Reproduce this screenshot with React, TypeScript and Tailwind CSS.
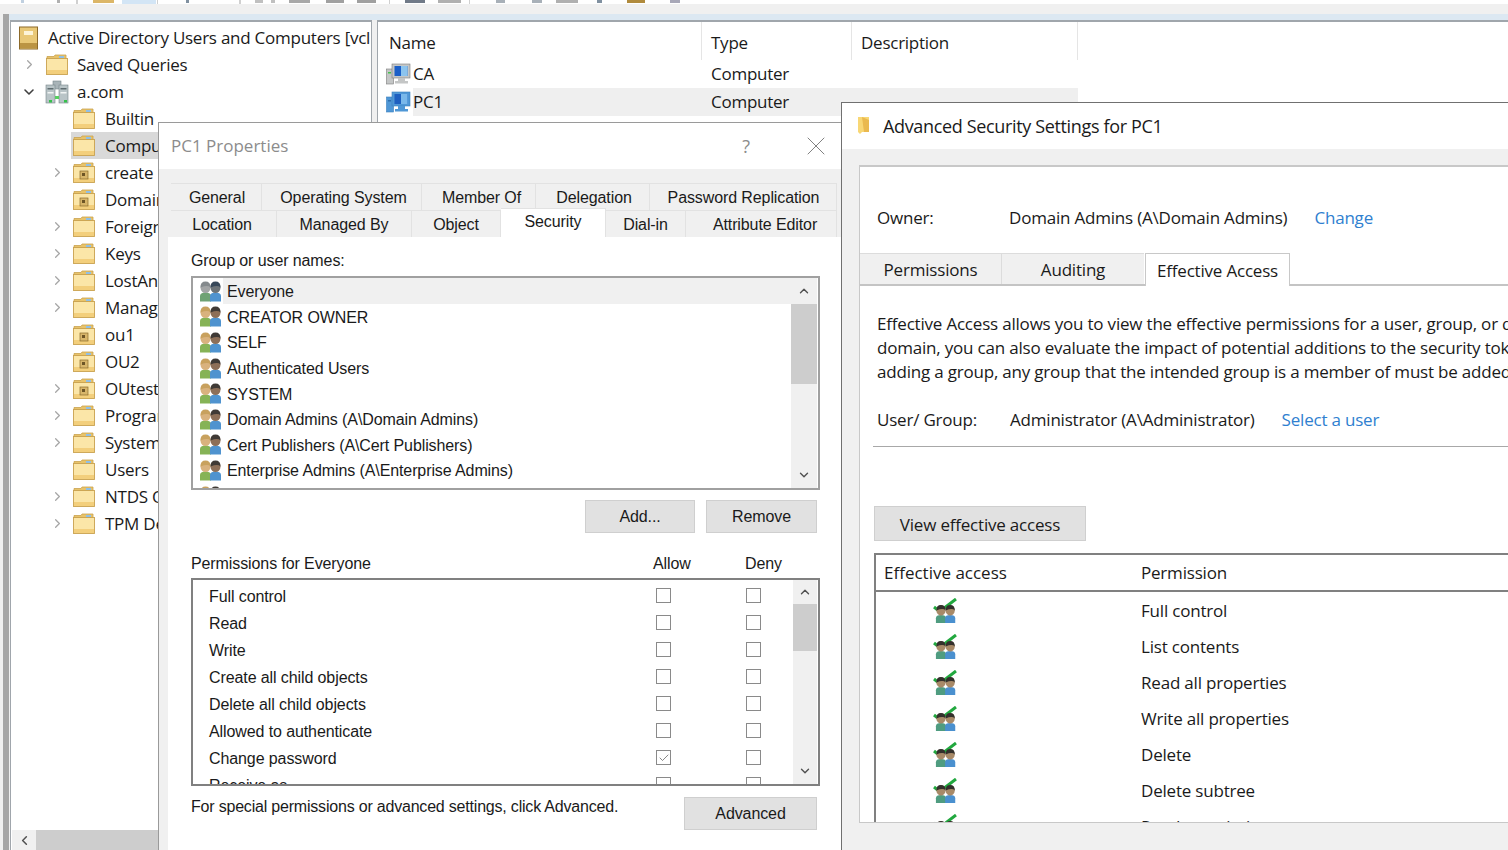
import React from 'react';
import { ChevronRight, ChevronDown, ChevronUp, ChevronLeft, X, Check } from 'lucide-react';

const treeRows = [
  { label: 'Builtin', icon: 'folder', arrow: false },
  { label: 'Computers', icon: 'folder', arrow: false, selected: true },
  { label: 'create new', icon: 'ou', arrow: true },
  { label: 'Domain Controllers', icon: 'ou', arrow: false },
  { label: 'ForeignSecurityPrincipals', icon: 'folder', arrow: true },
  { label: 'Keys', icon: 'folder', arrow: true },
  { label: 'LostAndFound', icon: 'folder', arrow: true },
  { label: 'Managed Service Accounts', icon: 'folder', arrow: true },
  { label: 'ou1', icon: 'ou', arrow: false },
  { label: 'OU2', icon: 'ou', arrow: false },
  { label: 'OUtest', icon: 'ou', arrow: true },
  { label: 'Program Data', icon: 'folder', arrow: true },
  { label: 'System', icon: 'folder', arrow: true },
  { label: 'Users', icon: 'folder', arrow: false },
  { label: 'NTDS Quotas', icon: 'folder', arrow: true },
  { label: 'TPM Devices', icon: 'folder', arrow: true },
];

const groups = [
  'Everyone',
  'CREATOR OWNER',
  'SELF',
  'Authenticated Users',
  'SYSTEM',
  'Domain Admins (A\\Domain Admins)',
  'Cert Publishers (A\\Cert Publishers)',
  'Enterprise Admins (A\\Enterprise Admins)',
  'Key Admins',
];

const perms = [
  'Full control',
  'Read',
  'Write',
  'Create all child objects',
  'Delete all child objects',
  'Allowed to authenticate',
  'Change password',
  'Receive as',
];

const effective = [
  'Full control',
  'List contents',
  'Read all properties',
  'Write all properties',
  'Delete',
  'Delete subtree',
  'Read permissions',
];

// slivers of the toolbar icons that stick out at the very top of the crop
const toolbarBits = [
  'w-[21px]', 'w-[3px] bg-[#c0d0e0]', 'w-[33px]', 'w-[3px] bg-[#b0b0b0]', 'w-[16px]', 'w-[2px] h-[4px] bg-[#d0d0d0]',
  'w-[15px]', 'w-[21px] bg-[#dcb667]', 'w-[8px]', 'w-[34px] h-[5px] bg-[#d3e5f5]', 'w-px', 'w-px h-[4px] bg-[#d0d0d0]',
  'w-[28px]', 'w-[3px] bg-[#8090a0]', 'w-[50px]', 'w-[2px] h-[4px] bg-[#d0d0d0]', 'w-[14px]', 'w-[8px] bg-[#c0c0c0]',
  'w-[8px]', 'w-[4px] bg-[#c0c0c0]', 'w-[14px]', 'w-[21px] bg-[#a8a8a8]', 'w-[16px]', 'w-[18px] bg-[#a0a0a0]',
  'w-[13px]', 'w-[19px] bg-[#a0a0a0]', 'w-[13px]', 'w-px h-[4px] bg-[#d0d0d0]', 'w-[15px]', 'w-[20px] bg-[#707a88]',
  'w-[13px]', 'w-[23px] bg-[#b0b0b0]', 'w-[8px]', 'w-px h-[4px] bg-[#d0d0d0]', 'w-[26px]', 'w-[9px] bg-[#a8b0b8]',
  'w-[27px]', 'w-[10px] bg-[#a8b0b8]', 'w-[14px]', 'w-[22px] bg-[#b0b0b0]', 'w-[19px]', 'w-[5px] bg-[#8090a0]',
  'w-[25px]', 'w-[18px] bg-[#b08a3c]', 'w-[25px]', 'w-[10px] bg-[#a8a8b8]',
];

function Folder({ ou = false }: { ou?: boolean }) {
  return (
    <svg width="24" height="24" viewBox="0 0 24 24" className="shrink-0">
      <path d="M2 5.5 L2 3.5 L9 3.5 L10 2 L21 2 L21 6 Z" fill="#e8c36a" stroke="#c9a24f" strokeWidth="0.8" />
      <rect x="14" y="3" width="5" height="2" fill="#8fc0e8" />
      <rect x="1.5" y="5.5" width="21" height="16" fill="#fbe6a8" stroke="#c9a24f" strokeWidth="0.9" />
      <rect x="2" y="17" width="20" height="4" fill="#f3cf7c" />
      {ou && (
        <>
          <rect x="8" y="10" width="8" height="8" fill="#d8b66a" stroke="#8a6a2c" strokeWidth="0.7" />
          <rect x="10" y="12" width="3" height="3" fill="#6d5526" />
        </>
      )}
    </svg>
  );
}

function RootIcon() {
  return (
    <svg width="20" height="24" viewBox="0 0 20 24" className="shrink-0">
      <rect x="0.5" y="1" width="18" height="22" fill="#e9c877" stroke="#8d6a2a" />
      <rect x="1" y="17" width="17" height="5" fill="#bb9443" />
      <rect x="5" y="5" width="9" height="4" fill="#fdf4d8" />
    </svg>
  );
}

function ServerIcon() {
  return (
    <svg width="24" height="24" viewBox="0 0 24 24" className="shrink-0">
      <rect x="8" y="1" width="8" height="8" fill="#a9b4b8" stroke="#77858a" strokeWidth="0.6" />
      <rect x="1" y="5" width="9" height="18" fill="#b9c4c7" stroke="#77858a" strokeWidth="0.6" />
      <rect x="14" y="5" width="9" height="18" fill="#b9c4c7" stroke="#77858a" strokeWidth="0.6" />
      <rect x="2.5" y="8" width="6" height="1.5" fill="#5f6c70" />
      <rect x="15.5" y="8" width="6" height="1.5" fill="#5f6c70" />
      <rect x="2.5" y="12" width="6" height="1.5" fill="#f1f4f4" />
      <rect x="15.5" y="12" width="6" height="1.5" fill="#f1f4f4" />
      <rect x="4" y="20" width="3" height="2.5" fill="#35c24a" />
      <rect x="19" y="20" width="3" height="2.5" fill="#35c24a" />
      <rect x="10" y="16" width="4" height="3" fill="#56d060" />
    </svg>
  );
}

function ComputerIcon({ selected = false }: { selected?: boolean }) {
  const shell = selected ? '#4f97d6' : '#c4c6c6';
  return (
    <svg width="25" height="22" viewBox="0 0 25 22" className="shrink-0">
      <rect x="0.5" y="6" width="7" height="15" fill={shell} stroke={selected ? '#3a7fbe' : '#7c7c7c'} strokeWidth="0.6" />
      <rect x="6" y="1" width="18" height="14" fill={shell} stroke={selected ? '#3a7fbe' : '#7c7c7c'} strokeWidth="0.6" />
      <rect x="8.5" y="3" width="13" height="10" fill={selected ? '#1d5fc0' : '#1b5fc8'} />
      <rect x="15" y="3" width="6.5" height="10" fill={selected ? '#7ab8ea' : '#8cc4ee'} />
      <rect x="12" y="15" width="7" height="3" fill={shell} />
      <rect x="9" y="18" width="13" height="2.5" fill={shell} />
      <rect x="2" y="9" width="3" height="1.5" fill={selected ? '#2d6fae' : '#46c24f'} />
    </svg>
  );
}

function Person({ x, skin, hair, body }: { x: number; skin: string; hair: string; body: string }) {
  return (
    <g>
      <path d={`M${x + 1} 21.5 L${x + 1} 16 Q${x + 1} 12.5 ${x + 6.5} 12.5 Q${x + 12} 12.5 ${x + 12} 16 L${x + 12} 21.5 Z`} fill={body} />
      <ellipse cx={x + 6.5} cy={7.5} rx={5} ry={5.6} fill={skin} />
      <path d={`M${x + 1.5} 7.5 Q${x + 1.5} 1.6 ${x + 6.5} 1.6 Q${x + 11.5} 1.6 ${x + 11.5} 7.5 Q${x + 9} 4.6 ${x + 1.5} 7.5 Z`} fill={hair} />
    </g>
  );
}

function GroupIcon({ muted = false }: { muted?: boolean }) {
  return (
    <svg width="24" height="22" viewBox="0 0 24 22" className="shrink-0">
      <Person x={0} skin={muted ? '#a3a5a6' : '#d9b27e'} hair={muted ? '#858a8d' : '#c8a15e'} body={muted ? '#6fa274' : '#86b356'} />
      <Person x={10} skin={muted ? '#6c7378' : '#8d6f58'} hair={muted ? '#37485a' : '#3f3a36'} body="#4f93cf" />
    </svg>
  );
}

function AccessIcon() {
  return (
    <svg width="25" height="25" viewBox="0 0 25 25" className="shrink-0">
      <path d="M1 9 L6 13 M10 11 L23 1" stroke="#22a83f" strokeWidth="3" fill="none" />
      <g transform="translate(2 5.5) scale(0.92)">
        <Person x={0} skin="#a88a68" hair="#33302c" body="#4f9c80" />
        <Person x={10} skin="#a88a68" hair="#33302c" body="#4a90cf" />
      </g>
    </svg>
  );
}

function Checkbox({ checked = false }: { checked?: boolean }) {
  return (
    <span className="flex h-[15px] w-[15px] items-center justify-center border border-[#8a8a8a] bg-white">
      {checked && <Check size={12} strokeWidth={1.4} className="text-[#555555]" />}
    </span>
  );
}

function ScrollBar({ width, thumbTop, thumbHeight }: { width: string; thumbTop: string; thumbHeight: string }) {
  return (
    <div className={`flex shrink-0 flex-col bg-[#f0f0f0] ${width}`}>
      <div className={`flex items-center justify-center ${thumbTop}`}>
        <ChevronUp size={14} strokeWidth={2.4} className="text-[#505050]" />
      </div>
      <div className={`bg-[#cdcdcd] ${thumbHeight}`} />
      <div className="flex-1" />
      <div className="flex h-[26px] items-center justify-center">
        <ChevronDown size={14} strokeWidth={2.4} className="text-[#505050]" />
      </div>
    </div>
  );
}

function Console() {
  return (
    <div className="flex h-full flex-col">
      <div className="flex h-[4px] shrink-0 items-start bg-white">
        {toolbarBits.map((b, i) => (
          <div key={i} className={`h-[3px] ${b} shrink-0`} />
        ))}
      </div>
      <div className="h-[10px] shrink-0 bg-[#f0f0f0]" />
      <div className="flex h-[6px] shrink-0">
        <div className="w-[3px] bg-[#f0f0f0]" />
        <div className="w-[6px] bg-[#a6a6a6]" />
        <div className="flex-1 bg-[#dce8f2]" />
      </div>
      <div className="flex min-h-0 flex-1 bg-[#f0f0f0]">
        <div className="ml-[3px] w-[6px] shrink-0 bg-[#a6a6a6]" />
        <div className="ml-px flex w-[362px] shrink-0 flex-col overflow-hidden border border-t-2 border-b-0 border-[#a0a6ac] bg-white">
          <div className="flex h-[29px] items-center whitespace-nowrap pl-[8px] pt-[2px]">
            <RootIcon />
            <span className="ml-[9px]">Active Directory Users and Computers [vcl</span>
          </div>
          <div className="flex h-[27px] items-center whitespace-nowrap pl-[11px]">
            <ChevronRight size={15} className="text-[#a6a6a6]" />
            <span className="ml-[8px]"><Folder /></span>
            <span className="ml-[8px]">Saved Queries</span>
          </div>
          <div className="flex h-[27px] items-center whitespace-nowrap pl-[10px]">
            <ChevronDown size={16} strokeWidth={2.4} className="text-[#404040]" />
            <span className="ml-[8px]"><ServerIcon /></span>
            <span className="ml-[8px]">a.com</span>
          </div>
          {treeRows.map((r) => (
            <div key={r.label} className="flex h-[27px] items-center whitespace-nowrap pl-[60px]">
              <span className={`-ml-[21px] w-[21px] ${r.arrow ? '' : 'invisible'}`}>
                <ChevronRight size={15} className="text-[#a6a6a6]" />
              </span>
              <span className={`flex h-[27px] items-center pl-px ${r.selected ? 'bg-[#d9d9d9]' : ''}`}>
                <Folder ou={r.icon === 'ou'} />
                <span className="ml-[9px] pr-[6px]">{r.label}</span>
              </span>
            </div>
          ))}
          <div className="flex-1" />
          <div className="flex h-[20px] shrink-0 pl-px">
            <div className="flex w-[24px] items-center justify-center bg-[#f0f0f0]">
              <ChevronLeft size={15} strokeWidth={2.4} className="text-[#505050]" />
            </div>
            <div className="flex-1 bg-[#cdcdcd]" />
          </div>
        </div>
        <div className="ml-[5px] flex-1 border-t-2 border-l border-[#a0a6ac] bg-white">
          <div className="flex h-[38px] w-[700px] items-center">
            <div className="flex h-full w-[324px] items-center border-r border-[#e5e5e5] pl-[11px] pt-[3px]">Name</div>
            <div className="flex h-full w-[150px] items-center border-r border-[#e5e5e5] pl-[9px] pt-[3px]">Type</div>
            <div className="flex h-full w-[226px] items-center border-r border-[#e5e5e5] pl-[9px] pt-[3px]">Description</div>
          </div>
          <div className="flex h-[28px] w-[700px] items-center">
            <div className="flex w-[324px] items-center pl-[8px]">
              <ComputerIcon />
              <span className="ml-[2px]">CA</span>
            </div>
            <span className="pl-[9px]">Computer</span>
          </div>
          <div className="flex h-[28px] w-[700px] items-center">
            <div className="flex h-full w-[324px] items-center pl-[8px]">
              <ComputerIcon selected />
              <span className="ml-[2px] flex h-full flex-1 items-center bg-[#efefef]">PC1</span>
            </div>
            <span className="flex h-full flex-1 items-center bg-[#efefef] pl-[9px]">Computer</span>
          </div>
        </div>
      </div>
    </div>
  );
}

function Tab({ label, width, active = false }: { label: string; width: string; active?: boolean }) {
  return (
    <div className={`flex items-center justify-center border-r border-t border-[#e2e2e2] ${width} ${active ? '-mb-px -mt-[2px] h-[30px] bg-white pb-[3px]' : 'h-[27px]'}`}>
      {label}
    </div>
  );
}

function PropertiesDialog() {
  return (
    <div className="flex h-full flex-col border-t border-l border-[#9a9a9a] bg-[#f0f0f0] font-['Liberation_Sans',sans-serif] text-[16px] leading-[20px] tracking-[-0.1px] text-[#1a1a1a]">
      <div className="flex h-[46px] shrink-0 items-center justify-between bg-white pl-[12px] pr-[10px] font-['Open_Sans',sans-serif] text-[#8c8c8c]">
        <span className="text-[17px] tracking-normal">PC1 Properties</span>
        <div className="flex items-center gap-[50px]">
          <span className="text-[18px]">?</span>
          <X size={32} strokeWidth={0.7} className="text-[#777777]" />
        </div>
      </div>
      <div className="ml-[12px] mt-[14px] flex shrink-0">
        <Tab label="General" width="w-[91px] pt-[2px] pl-[2px]" />
        <Tab label="Operating System" width="w-[160px] pt-[2px] pl-[4px]" />
        <Tab label="Member Of" width="w-[114px] pt-[2px] pl-[6px]" />
        <Tab label="Delegation" width="w-[114px] pt-[2px] pl-[3px]" />
        <Tab label="Password Replication" width="w-[187px] pt-[2px] pl-px" />
      </div>
      <div className="ml-[12px] flex h-[27px] shrink-0 items-start">
        <Tab label="Location" width="w-[106px] pt-[2px] pr-[3px]" />
        <Tab label="Managed By" width="w-[135px] pt-[2px]" />
        <Tab label="Object" width="w-[89px] pt-[2px]" />
        <Tab label="Security" width="w-[105px]" active />
        <Tab label="Dial-in" width="w-[80px] pt-[2px]" />
        <Tab label="Attribute Editor" width="w-[151px] pt-[2px] pl-[8px]" />
      </div>
      <div className="ml-[9px] flex min-h-0 flex-1 flex-col bg-white px-[23px]">
        <div className="mt-[14px] h-[20px]">Group or user names:</div>
        <div className="mt-[5px] flex h-[214px] w-[629px] shrink-0 overflow-hidden border-2 border-[#a0a0a0]">
          <div className="min-w-0 flex-1 overflow-hidden">
            {groups.map((g, i) => (
              <div key={g} className="flex h-[25.6px] items-center whitespace-nowrap pl-[6px]">
                <GroupIcon muted={i === 0} />
                <span className={`flex h-full flex-1 items-center pl-[4px] pt-[3px] ${i === 0 ? 'bg-[#f0f0f0]' : ''}`}>{g}</span>
              </div>
            ))}
          </div>
          <ScrollBar width="w-[26px]" thumbTop="h-[26px]" thumbHeight="h-[80px]" />
          <div className="w-px shrink-0" />
        </div>
        <div className="mt-[10px] flex h-[33px] shrink-0 justify-end gap-[11px] pr-[2px]">
          <button className="w-[110px] border border-[#cfcfcf] bg-[#e1e1e1]">Add...</button>
          <button className="w-[111px] border border-[#cfcfcf] bg-[#e1e1e1]">Remove</button>
        </div>
        <div className="mt-[21px] flex h-[20px] shrink-0 items-center">
          <span className="w-[462px]">Permissions for Everyone</span>
          <span className="w-[92px]">Allow</span>
          <span>Deny</span>
        </div>
        <div className="mt-[4px] flex h-[208px] w-[629px] shrink-0 overflow-hidden border-2 border-[#808080]">
          <div className="min-w-0 flex-1 overflow-hidden">
            {perms.map((p, i) => (
              <div key={p} className="flex h-[27px] shrink-0 items-center whitespace-nowrap pl-[16px] pt-[4px]">
                <span className="w-[447px] pt-[2px]">{p}</span>
                <span className="w-[90px]"><Checkbox checked={i === 6} /></span>
                <Checkbox />
              </div>
            ))}
          </div>
          <ScrollBar width="w-[24px]" thumbTop="h-[24px]" thumbHeight="h-[47px]" />
          <div className="w-px shrink-0" />
        </div>
        <div className="mt-[11px] flex shrink-0 items-start justify-between pr-[2px]">
          <span className="tracking-[-0.2px]">For special permissions or advanced settings, click Advanced.</span>
          <button className="h-[33px] w-[133px] border border-[#cfcfcf] bg-[#e1e1e1]">Advanced</button>
        </div>
      </div>
    </div>
  );
}

function AdvancedWindow() {
  return (
    <div className="flex h-full flex-col border-t border-l border-[#707070] bg-[#f0f0f0] tracking-[-0.2px] text-[#1a1a1a]">
      <div className="flex h-[46px] shrink-0 items-center bg-white pl-[16px]">
        <svg width="12" height="20" viewBox="0 0 12 20" className="shrink-0">
          <path d="M0 1 H11 V16 H4 L2 18 L0 16 Z" fill="#f8d775" />
          <path d="M4 1 L11 4 V16 H6 Z" fill="#eab94f" />
        </svg>
        <span className="ml-[13px] text-[18px] tracking-[-0.35px]">Advanced Security Settings for PC1</span>
      </div>
      <div className="ml-[17px] mt-[16px] flex h-[658px] w-[700px] flex-col overflow-hidden border-t-2 border-b border-l border-[#c8c8c8] bg-white">
        <div className="mt-[36px] flex h-[30px] shrink-0 items-center">
          <span className="ml-[17px] w-[132px]">Owner:</span>
          <span className="whitespace-nowrap">Domain Admins (A\Domain Admins)</span>
          <span className="ml-[27px] text-[#2f7fd0]">Change</span>
        </div>
        <div className="mt-[20px] flex h-[33px] shrink-0 border-b-2 border-[#c4c4c4]">
          <div className="flex w-[142px] items-center justify-center border-t border-r border-[#dcdcdc] bg-[#f0f0f0] pt-[2px]">Permissions</div>
          <div className="flex w-[142px] items-center justify-center border-t border-[#dcdcdc] bg-[#f0f0f0] pt-[2px]">Auditing</div>
          <div className="-mb-[2px] ml-px flex h-[33px] w-[145px] items-center justify-center border-t border-r border-l border-[#c8c8c8] bg-white pt-[2px]">Effective Access</div>
        </div>
        <div className="mt-[26px] shrink-0 whitespace-nowrap pl-[17px] leading-[24px]">
          <div>Effective Access allows you to view the effective permissions for a user, group, or device account. If the account is a member of a</div>
          <div>domain, you can also evaluate the impact of potential additions to the security token for the account. When you evaluate the impact of</div>
          <div>adding a group, any group that the intended group is a member of must be added separately.</div>
        </div>
        <div className="mt-[22px] flex h-[28px] shrink-0 items-center whitespace-nowrap">
          <span className="ml-[17px] w-[133px]">User/ Group:</span>
          <span>Administrator (A\Administrator)</span>
          <span className="ml-[27px] text-[#2f7fd0]">Select a user</span>
        </div>
        <div className="ml-[13px] mt-[12px] h-px shrink-0 bg-[#a8a8a8]" />
        <button className="ml-[14px] mt-[59px] h-[35px] w-[212px] shrink-0 border border-[#cfcfcf] bg-[#e1e1e1] pt-[2px] tracking-[-0.2px]">View effective access</button>
        <div className="ml-[14px] mt-[12px] flex min-h-0 flex-1 flex-col border-t-2 border-l-2 border-[#808080]">
          <div className="flex h-[37px] shrink-0 items-center border-b-2 border-[#808080]">
            <span className="w-[265px] pl-[8px] tracking-normal">Effective access</span>
            <span>Permission</span>
          </div>
          {effective.map((p) => (
            <div key={p} className="flex h-[36px] shrink-0 items-center">
              <span className="w-[265px] pl-[57px]"><AccessIcon /></span>
              <span className="pt-px">{p}</span>
            </div>
          ))}
        </div>
      </div>
    </div>
  );
}

export default function App() {
  return (
    <div className="relative h-[850px] w-[1508px] overflow-hidden bg-[#f0f0f0] font-['Open_Sans',sans-serif] text-[17px] tracking-[-0.25px] text-[#1a1a1a]">
      <Console />
      <div className="absolute left-[158px] top-[122px] h-[728px] w-[684px]">
        <PropertiesDialog />
      </div>
      <div className="absolute left-[841px] top-[102px] h-[748px] w-[667px] overflow-hidden">
        <AdvancedWindow />
      </div>
    </div>
  );
}
